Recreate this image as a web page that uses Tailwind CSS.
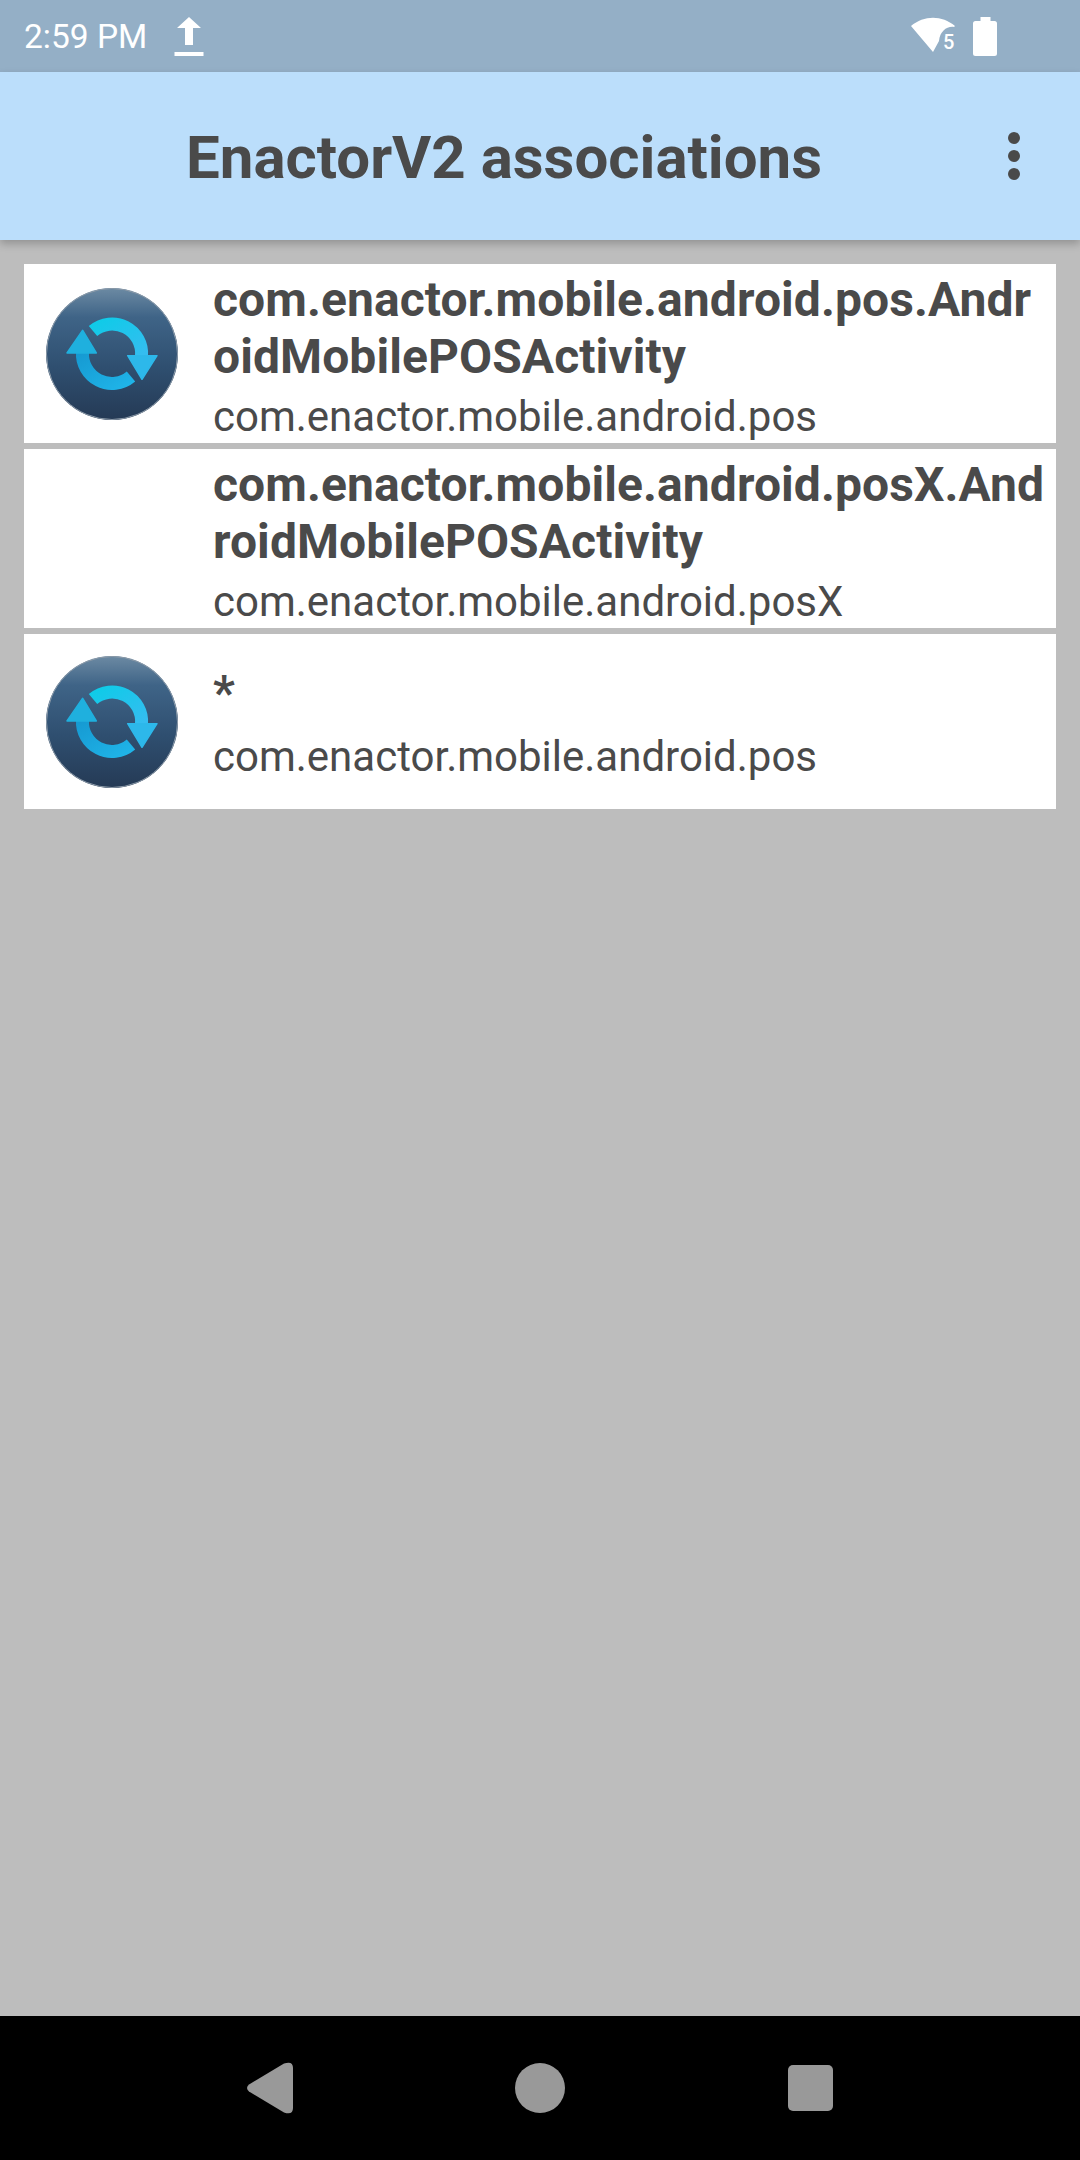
<!DOCTYPE html>
<html><head><meta charset="utf-8"><script src="https://cdn.jsdelivr.net/npm/@tailwindcss/browser@4"></script></head>
<body class="m-0">
<div class="w-[1080px] h-[2160px] flex flex-col bg-[#bdbdbd] font-['Roboto',sans-serif] text-[#4a4a4a] overflow-hidden">
  <div class="h-[72px] shrink-0 bg-[#94afc6] relative flex items-center pl-[24px] text-white text-[33.5px]">
    <span class="leading-none mt-[2px]">2:59 PM</span>
    <svg class="ml-[27px] w-[30px] h-[42px] mt-[4px]" viewBox="0 0 30 42" fill="#fff"><path d="M15 0 L27 11 H19 V28 H11 V11 H3 Z"/><rect x="0.5" y="35" width="29" height="4"/></svg>
    <div class="ml-auto mr-[83px] flex items-center gap-[18px]">
      <div class="relative w-[44px] h-[38px]">
        <svg class="w-[44px] h-[38px]" viewBox="0 0 44 38" fill="#fff"><path d="M0 9 C13 -2 31 -2 44 9 L43 10 C36 9 29 14 28 24 L22 35 Z"/></svg>
        <span class="absolute left-[32px] top-[14px] text-[20px] leading-[22px] font-medium">5</span>
      </div>
      <svg class="w-[24px] h-[39px]" viewBox="0 0 24 39" fill="#fff"><path d="M7.5 0 H17.5 V4 H21.5 Q24 4 24 6.5 V36.5 Q24 39 21.5 39 H2.5 Q0 39 0 36.5 V6.5 Q0 4 2.5 4 H7.5 Z"/></svg>
    </div>
  </div>
  <div class="h-[168px] shrink-0 bg-[#bbdefb] flex items-center pl-[186px] shadow-[0_4px_8px_rgba(0,0,0,0.22)] relative z-10">
    <h1 class="text-[60px] font-bold leading-none mt-[4px]">EnactorV2 associations</h1>
    <div class="ml-auto mr-[60px] flex flex-col gap-[6px]">
      <span class="block w-[12px] h-[12px] rounded-full bg-[#4a4a4a]"></span>
      <span class="block w-[12px] h-[12px] rounded-full bg-[#4a4a4a]"></span>
      <span class="block w-[12px] h-[12px] rounded-full bg-[#4a4a4a]"></span>
    </div>
  </div>
  <main class="flex-1 pt-[24px] px-[24px] flex flex-col gap-[6px]">
    <div class="h-[179px] bg-white flex">
      <div class="w-[189px] shrink-0 flex items-center pl-[21px]">
        <svg class="w-[134px] h-[134px] blur-[0.6px]" viewBox="0 0 134 134">
          <defs>
            <linearGradient id="bg1" x1="0" y1="0" x2="0" y2="1"><stop offset="0" stop-color="#6c8aa3"/><stop offset="0.22" stop-color="#3f6487"/><stop offset="0.6" stop-color="#2f4f70"/><stop offset="1" stop-color="#253a55"/></linearGradient>
            <linearGradient id="ar1" x1="0" y1="0" x2="1" y2="1"><stop offset="0" stop-color="#0fcbe8"/><stop offset="1" stop-color="#35bdf0"/></linearGradient>
            <linearGradient id="br1" x1="0" y1="0" x2="1" y2="1"><stop offset="0" stop-color="#169ad2"/><stop offset="1" stop-color="#1fb4e8"/></linearGradient>
          </defs>
          <circle cx="67" cy="67" r="66" fill="url(#bg1)"/>
          <circle cx="67" cy="67" r="65.5" fill="none" stroke="#8c9aa8" stroke-width="1"/>
          <path d="M48 44 A29.5 29.5 0 0 1 96.5 69" fill="none" stroke="url(#ar1)" stroke-width="13"/>
          <path d="M37.5 65 A29.5 29.5 0 0 0 86 89.5" fill="none" stroke="url(#br1)" stroke-width="13"/>
          <path d="M37.7 43.3 L22 66 H51.3 Z" fill="#1fb0de" stroke="#1fb0de" stroke-width="1.5" stroke-linejoin="round"/>
          <path d="M97 92.3 L82.7 68.7 H112 Z" fill="#2db8ea" stroke="#2db8ea" stroke-width="1.5" stroke-linejoin="round"/>
        </svg>
      </div>
      <div class="flex-1 min-w-0 pt-[7px] pr-[6px]">
        <div class="text-[48px] font-bold leading-[57px] tracking-[0.08px] break-all">com.enactor.mobile.android.pos.AndroidMobilePOSActivity</div>
        <div class="text-[42px] leading-[49px] mt-[7px]">com.enactor.mobile.android.pos</div>
      </div>
    </div>
    <div class="h-[179px] bg-white flex">
      <div class="w-[189px] shrink-0"></div>
      <div class="flex-1 min-w-0 pt-[7px] pr-[6px]">
        <div class="text-[48px] font-bold leading-[57px] tracking-[0.08px] break-all">com.enactor.mobile.android.posX.AndroidMobilePOSActivity</div>
        <div class="text-[42px] leading-[49px] mt-[7px]">com.enactor.mobile.android.posX</div>
      </div>
    </div>
    <div class="h-[175px] bg-white flex">
      <div class="w-[189px] shrink-0 flex items-center pl-[21px]">
        <svg class="w-[134px] h-[134px] blur-[0.6px]" viewBox="0 0 134 134">
          <defs>
            <linearGradient id="bg2" x1="0" y1="0" x2="0" y2="1"><stop offset="0" stop-color="#6c8aa3"/><stop offset="0.22" stop-color="#3f6487"/><stop offset="0.6" stop-color="#2f4f70"/><stop offset="1" stop-color="#253a55"/></linearGradient>
            <linearGradient id="ar2" x1="0" y1="0" x2="1" y2="1"><stop offset="0" stop-color="#0fcbe8"/><stop offset="1" stop-color="#35bdf0"/></linearGradient>
            <linearGradient id="br2" x1="0" y1="0" x2="1" y2="1"><stop offset="0" stop-color="#169ad2"/><stop offset="1" stop-color="#1fb4e8"/></linearGradient>
          </defs>
          <circle cx="67" cy="67" r="66" fill="url(#bg2)"/>
          <circle cx="67" cy="67" r="65.5" fill="none" stroke="#8c9aa8" stroke-width="1"/>
          <path d="M48 44 A29.5 29.5 0 0 1 96.5 69" fill="none" stroke="url(#ar2)" stroke-width="13"/>
          <path d="M37.5 65 A29.5 29.5 0 0 0 86 89.5" fill="none" stroke="url(#br2)" stroke-width="13"/>
          <path d="M37.7 43.3 L22 66 H51.3 Z" fill="#1fb0de" stroke="#1fb0de" stroke-width="1.5" stroke-linejoin="round"/>
          <path d="M97 92.3 L82.7 68.7 H112 Z" fill="#2db8ea" stroke="#2db8ea" stroke-width="1.5" stroke-linejoin="round"/>
        </svg>
      </div>
      <div class="flex-1 min-w-0 pt-[31px] pr-[6px]">
        <div class="text-[48px] font-bold leading-[56px]">*</div>
        <div class="text-[42px] leading-[49px] mt-[11px]">com.enactor.mobile.android.pos</div>
      </div>
    </div>
  </main>
  <nav class="h-[144px] shrink-0 bg-black relative flex items-center">
    <svg class="absolute left-[246px] top-[46px] w-[48px] h-[52px]" viewBox="0 0 48 52" fill="#999"><path d="M3 22.5 L38 1.5 Q47 -1.5 47 6 V46 Q47 53.5 38 50.5 L3 29.5 Q-1 26 3 22.5 Z"/></svg>
    <span class="absolute left-[515px] top-[47px] w-[50px] h-[50px] rounded-full bg-[#999]"></span>
    <span class="absolute left-[788px] top-[49px] w-[45px] h-[46px] rounded-[5px] bg-[#999]"></span>
  </nav>
</div>
</body></html>
